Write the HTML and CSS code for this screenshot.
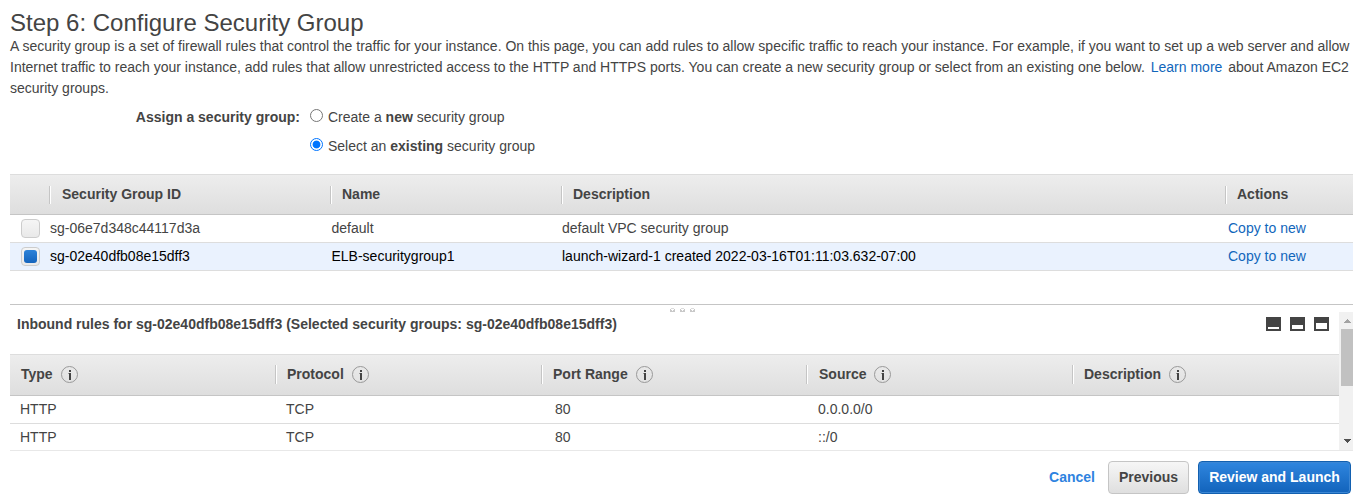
FILE: index.html
```html
<!DOCTYPE html>
<html lang="en">
<head>
<meta charset="utf-8">
<title>Configure Security Group</title>
<link rel="stylesheet" href="styles.css">
</head>
<body>
<main class="wizard">
  <h1 class="title">Step 6: Configure Security Group</h1>
  <p class="intro"><span class="l1">A security group is a set of firewall rules that control the traffic for your instance. On this page, you can add rules to allow specific traffic to reach your instance. For example, if you want to set up a web server and allow</span><br><span class="l2">Internet traffic to reach your instance, add rules that allow unrestricted access to the HTTP and HTTPS ports. You can create a new security group or select from an existing one below. <a class="learn">Learn more</a> about Amazon EC2</span><br><span class="l3">security groups.</span></p>
  <div class="assign">
    <div class="assign-label">Assign a security group:</div>
    <div class="options">
      <div class="option"><span class="radio"></span><span>Create a <b>new</b> security group</span></div>
      <div class="option"><span class="radio on"></span><span>Select an <b>existing</b> security group</span></div>
    </div>
  </div>
  <section class="groups">
    <div class="row head"><span></span><span class="th">Security Group ID</span><span class="th">Name</span><span class="th">Description</span><span class="th">Actions</span></div>
    <div class="row"><span class="check"></span><span>sg-06e7d348c44117d3a</span><span>default</span><span>default VPC security group</span><a>Copy to new</a></div>
    <div class="row selected"><span class="check on"></span><span>sg-02e40dfb08e15dff3</span><span>ELB-securitygroup1</span><span>launch-wizard-1 created 2022-03-16T01:11:03.632-07:00</span><a>Copy to new</a></div>
  </section>
  <section class="pane">
    <svg class="grip" width="26" height="5" viewBox="0 0 26 5"><g id="g"><path d="M0 1h5v3H0z" fill="#c9c9c9"/><path d="M1 0h3v1H1z" fill="#dcdcdc"/><path d="M1 1h3v1H1zM2 2h1v1H2z" fill="#fff"/></g><use href="#g" x="10"/><use href="#g" x="20"/></svg>
    <div class="pane-body">
      <div class="pane-main">
        <div class="pane-head">
          <h2 class="pane-title">Inbound rules for sg-02e40dfb08e15dff3 (Selected security groups: sg-02e40dfb08e15dff3)</h2>
          <div class="layouts"><i class="lay low"></i><i class="lay mid"></i><i class="lay high"></i></div>
        </div>
        <div class="rules">
          <div class="row head"><span class="th">Type<i class="info"></i></span><span class="th">Protocol<i class="info"></i></span><span class="th">Port Range<i class="info"></i></span><span class="th source-head">Source<i class="info"></i></span><span class="th">Description<i class="info"></i></span></div>
          <div class="row"><span>HTTP</span><span>TCP</span><span class="port">80</span><span class="source">0.0.0.0/0</span></div>
          <div class="row last"><span>HTTP</span><span>TCP</span><span class="port">80</span><span class="source">::/0</span></div>
        </div>
      </div>
      <div class="scrollbar">
        <svg width="14" height="17" viewBox="0 0 14 17" shape-rendering="crispEdges"><path d="M5 10h7v1H5zM6 9h5v1H6zM7 8h3v1H7zM8 7h1v1H8z" fill="#a3a3a3"/></svg>
        <div class="thumb"></div>
        <svg width="14" height="17" viewBox="0 0 14 17" shape-rendering="crispEdges"><path d="M5 6h7v1H5zM6 7h5v1H6zM7 8h3v1H7zM8 9h1v1H8z" fill="#505050"/></svg>
      </div>
    </div>
  </section>
  <footer class="actions"><a class="cancel">Cancel</a><div class="btn">Previous</div><div class="btn primary">Review and Launch</div></footer>
</main>
</body>
</html>
```
FILE: styles.css
```css
* { box-sizing: border-box; }
body { margin: 0; background: #fff; color: #444; font: 14px/21px "Liberation Sans", Arial, sans-serif; overflow: hidden; }
a { color: #1166bb; }
.wizard { width: 1353px; height: 496px; padding-left: 10px; white-space: nowrap; display: flex; flex-direction: column; }
.title { margin: 0; padding-top: 9px; height: 36px; font-size: 24px; line-height: 28px; font-weight: 400; }
.intro { margin: 0; height: 63px; }
.learn { margin: 0 2px; }
.assign { display: flex; height: 75px; padding-top: 8px; }
.assign-label { width: 290px; text-align: right; font-weight: 700; }
.options { padding-left: 10px; }
.option { display: flex; height: 29px; }
.radio { width: 13px; height: 13px; margin: 2px 5px 0 0; border: 1px solid #767676; border-radius: 50%; }
.radio.on { border-color: #0075ff; background: radial-gradient(circle, #0075ff 3.5px, #fff 4.3px); }
.row { display: grid; height: 28px; line-height: 27px; border-bottom: 1px solid #ddd; }
.groups .row { grid-template-columns: 40px 281.5px 230.5px 666px 1fr; }
.groups { height: 130px; }
.groups .row.head { height: 41px; grid-template-columns: 39px 281px 231px 664px 1fr; }
.row.head { align-items: center; border-top: 1px solid #ddd; border-bottom: 1px solid #c5c5c5; background: linear-gradient(#ededed, #dedede); font-weight: 700; }
.th { display: flex; align-items: center; height: 18px; padding-left: 11px; border-left: 1px solid #c5c5c5; box-shadow: inset 1px 0 #fff; }
.groups .th { padding-left: 12px; }
.groups .th:nth-child(n+3) { padding-left: 11px; }
.selected { background: #eaf2fe; color: #000; }
.check { display: flex; align-items: center; justify-content: center; width: 19px; height: 19px; margin: 4px 0 0 11px; border: 1px solid #ccc; border-radius: 4px; background: linear-gradient(#f5f5f5, #e9e9e9); }
.check.on::before { content: ""; width: 13px; height: 13px; border-radius: 3px; background: linear-gradient(#2e83d9, #1464bd); }
.pane { position: relative; height: 147px; border-top: 1px solid #c5c5c5; border-bottom: 1px solid #e8e8e8; }
.grip { position: absolute; left: 660px; top: 3px; }
.pane-body { display: flex; height: 145px; }
.pane-main { flex: 1; }
.pane-head { display: flex; justify-content: space-between; height: 49px; padding: 9px 10px 0 7px; }
.pane-title { margin: 0; font-size: 14px; line-height: 21px; }
.layouts { display: flex; gap: 9px; padding-top: 3px; }
.lay { width: 15px; height: 14px; border: 2px solid #444; background: #fff; }
.low { border-top-width: 10px; }
.mid { border-top-width: 8px; }
.high { border-top-width: 6px; }
.rules .row { grid-template-columns: 266px 266px 265px 266px 1fr; }
.rules .row.head { height: 42px; padding-bottom: 1px; grid-template-columns: 265px 266px 265px 266px 1fr; }
.rules .row:not(.head) { padding-left: 10px; }
.rules .th { height: 19px; }
.rules .th:first-child { border-color: transparent; box-shadow: none; padding-left: 10px; }
.rules .source-head { padding-left: 12px; }
.rules .row.last { border: 0; height: 26px; }
.port, .source { padding-left: 1px; }
.port { padding-left: 3px; }
.info { position: relative; width: 17px; height: 17px; margin-left: 8px; border: 1px solid #999; border-radius: 50%; }
.info::before { content: ""; position: absolute; left: 7px; top: 3px; width: 2px; height: 2px; background: #444; }
.info::after { content: ""; position: absolute; left: 6px; top: 6px; width: 3px; height: 7px; background: linear-gradient(#444, #444) 1px 0 / 2px 7px no-repeat, linear-gradient(#999, #999) 0 0 / 1px 1px no-repeat; }
.scrollbar { display: flex; flex-direction: column; width: 14px; height: 138px; margin-top: 7px; background: #f1f1f1; }
.scrollbar svg { display: block; }
.thumb { height: 57px; margin: 0 0 auto 2px; background: #c1c1c1; }
.actions { display: flex; height: 43px; padding: 10px 2px 0 0; justify-content: flex-end; font-weight: 700; line-height: 31px; }
.cancel { margin: 1px 13px 0 0; color: #2e83e0; }
.btn { width: 81px; height: 33px; border: 1px solid #c5c5c5; border-radius: 4px; text-align: center; background: linear-gradient(#f6f6f6, #dfdfdf); }
.primary { width: 153px; margin-left: 9px; border-color: #1260b0; color: #fff; background: linear-gradient(#2f86df, #1263bb); box-shadow: inset 0 0 0 1px #3b86d4; }
```
